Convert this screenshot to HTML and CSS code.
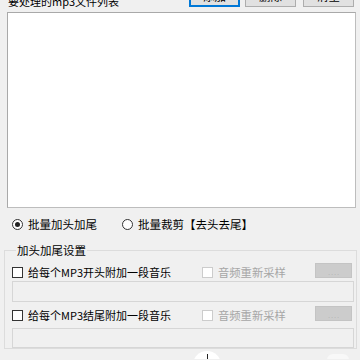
FILE: index.html
```html
<!DOCTYPE html>
<html lang="zh">
<head>
<meta charset="utf-8">
<link rel="stylesheet" href="styles.css">
</head>
<body>
<div class="app">
  <div class="top">
    <div class="title">要处理的mp3文件列表</div>
    <div class="btns">
      <button class="btn default">添加</button>
      <button class="btn">删除</button>
      <button class="btn">清空</button>
    </div>
  </div>
  <div class="list"></div>
  <div class="modes">
    <label class="radio"><span class="dot on"></span>批量加头加尾</label>
    <label class="radio second"><span class="dot"></span>批量裁剪【去头去尾】</label>
  </div>
  <fieldset class="group">
    <legend>加头加尾设置</legend>
    <div class="row">
      <span class="chk"></span><span class="lbl main">给每个MP3开头附加一段音乐</span>
      <span class="chk off"></span><span class="lbl off">音频重新采样</span>
      <span class="dots">. . . .</span>
    </div>
    <div class="field f1"></div>
    <div class="row r2">
      <span class="chk"></span><span class="lbl main">给每个MP3结尾附加一段音乐</span>
      <span class="chk off"></span><span class="lbl off">音频重新采样</span>
      <span class="dots">. . . .</span>
    </div>
    <div class="field f2"></div>
  </fieldset>
  <div class="bottom">
    <span class="knob"></span>
    <span class="knob2"></span>
  </div>
</div>
</body>
</html>
```
FILE: styles.css
```css
html, body {
  margin: 0;
  padding: 0;
  background: #f0f0f0;
  overflow: hidden;
  width: 360px;
  height: 360px;
}
.app {
  margin-top: -16px;
  font-family: "Noto Sans CJK SC", "Noto Sans", sans-serif;
  font-size: 11.5px;
  color: #000;
}
.top {
  display: flex;
  align-items: flex-end;
  height: 23px;
  padding-left: 8px;
}
.title {
  font-size: 11px;
  line-height: 14px;
  margin-bottom: -1px;
}
.btns {
  margin-left: auto;
  margin-right: 6px;
  display: flex;
  gap: 5px;
}
.btns .btn:last-child { margin-left: 2px; }
.btn {
  width: 51px;
  height: 23px;
  box-sizing: border-box;
  background: #e1e1e1;
  border: 1px solid #adadad;
  font-family: inherit;
  font-size: 11.5px;
  padding: 0;
  color: #000;
}
.btn.default {
  border-color: #0078d7;
  box-shadow: inset 0 0 0 1px #0078d7;
}
.list {
  margin: 5px 4px 0 7px;
  height: 196px;
  box-sizing: border-box;
  background: #fff;
  border: 1px solid #a9a9a9;
  border-right-color: #bdbdbd;
  border-bottom-color: #bdbdbd;
}
.modes {
  display: flex;
  align-items: center;
  height: 16px;
  margin-top: 8px;
  padding-left: 12px;
  font-size: 11.5px;
}
.radio {
  display: flex;
  align-items: center;
  gap: 5px;
}
.radio.second { margin-left: 25px; }
.dot {
  width: 11px;
  height: 11px;
  box-sizing: border-box;
  border: 1px solid #333;
  border-radius: 50%;
  background: #fff;
  position: relative;
}
.dot.on::after {
  content: "";
  position: absolute;
  left: 2px;
  top: 2px;
  width: 5px;
  height: 5px;
  border-radius: 50%;
  background: #222;
}
.group {
  margin: 10px 3px 0 4px;
  padding: 0 1px 0 7px;
  border: 1px solid #dcdcdc;
  min-width: 0;
}
.group legend {
  padding: 0 1px;
  margin-left: 4px;
  font-size: 11.5px;
  line-height: 16px;
}
.row {
  display: flex;
  align-items: center;
  height: 18px;
  margin-top: 5px;
}
.row.r2 { margin-top: 4px; }
.chk {
  width: 11px;
  height: 11px;
  box-sizing: border-box;
  border: 1px solid #333;
  background: #fff;
  margin-right: 5px;
  flex: none;
}
.chk.off {
  border-color: #cccccc;
}
.lbl { font-size: 11px; white-space: nowrap; }
.lbl.main { flex: 0 0 174px; }
.lbl.off { color: #a6a6a6; font-size: 11.3px; }
.dots {
  margin-left: auto;
  margin-right: 3px;
  width: 37px;
  height: 15px;
  box-sizing: border-box;
  background: #cccccc;
  border: 1px solid #c4c4c4;
  color: #a8a8a8;
  font-size: 6px;
  line-height: 18px;
  text-align: center;
  align-self: flex-start;
  overflow: hidden;
}
.field {
  height: 21px;
  box-sizing: border-box;
  margin-top: 0;
  margin-right: 1px;
  background: #f0f0f0;
  border: 1px solid #d6d6d6;
}
.field.f2 { height: 20px; margin-top: 4px; }
.bottom {
  position: relative;
  height: 10px;
  overflow: hidden;
}
.knob {
  position: absolute;
  left: 193px;
  top: 2px;
  width: 28px;
  height: 28px;
  border-radius: 50%;
  background: #fff;
}
.knob::after {
  content: "";
  position: absolute;
  left: 14px;
  top: 3px;
  width: 1px;
  height: 8px;
  background: #222;
}
.knob2 {
  position: absolute;
  left: 327px;
  top: 5px;
  width: 22px;
  height: 14px;
  border-radius: 6px;
  background: #f8f8f8;
}
```
